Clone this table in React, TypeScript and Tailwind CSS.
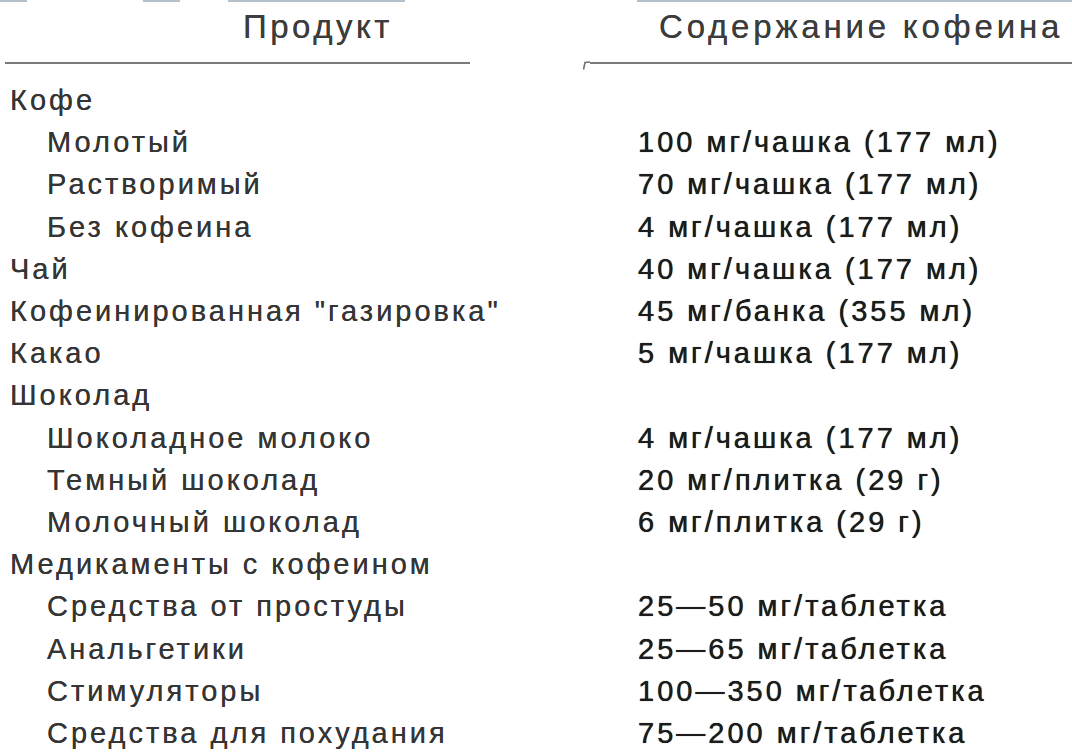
const rows: { name: string; sub?: boolean; value?: string }[] = [
  { name: "Кофе" },
  { name: "Молотый", sub: true, value: "100 мг/чашка (177 мл)" },
  { name: "Растворимый", sub: true, value: "70 мг/чашка (177 мл)" },
  { name: "Без кофеина", sub: true, value: "4 мг/чашка (177 мл)" },
  { name: "Чай", value: "40 мг/чашка (177 мл)" },
  { name: "Кофеинированная \"газировка\"", value: "45 мг/банка (355 мл)" },
  { name: "Какао", value: "5 мг/чашка (177 мл)" },
  { name: "Шоколад" },
  { name: "Шоколадное молоко", sub: true, value: "4 мг/чашка (177 мл)" },
  { name: "Темный шоколад", sub: true, value: "20 мг/плитка (29 г)" },
  { name: "Молочный шоколад", sub: true, value: "6 мг/плитка (29 г)" },
  { name: "Медикаменты с кофеином" },
  { name: "Средства от простуды", sub: true, value: "25—50 мг/таблетка" },
  { name: "Анальгетики", sub: true, value: "25—65 мг/таблетка" },
  { name: "Стимуляторы", sub: true, value: "100—350 мг/таблетка" },
  { name: "Средства для похудания", sub: true, value: "75—200 мг/таблетка" },
];

export default function App() {
  return (
    <div className="w-[1072px] h-[755px] overflow-hidden bg-white [font-family:'Liberation_Sans',Arial,sans-serif]">
      {/* scan edge marks along the top */}
      <div className="flex h-[2px]">
        <div className="w-[27px] bg-[#b4c0ca]" />
        <div className="ml-[116px] w-[37px] bg-[#b4c0ca]" />
        <div className="ml-[48px] w-[177px] bg-[#b4c0ca]" />
        <div className="ml-[232px] flex-1 bg-[#b4c0ca]" />
      </div>

      {/* header */}
      <div className="flex h-[77px]">
        <div className="ml-[5px] w-[465px] flex flex-col">
          <div className="pl-[238px] pt-[6px] text-[33px] leading-[38px] text-[#3c3c3c] tracking-[3.5px] [text-shadow:0_0_0.6px_#555]">Продукт</div>
          <div className="mt-[16px] h-[2px] bg-[#7a7a7a]" />
        </div>
        <div className="ml-[113px] flex-1 flex flex-col">
          <div className="pl-[76px] pt-[6px] text-[33px] leading-[38px] text-[#3c3c3c] tracking-[3.8px] whitespace-nowrap [text-shadow:0_0_0.6px_#555]">Содержание кофеина</div>
          <div className="mt-[16px] flex items-start">
            <svg width="7" height="9" viewBox="0 0 7 9" className="-mt-[1px] shrink-0">
              <path d="M0.5 8.5 L2 1.5 L7 1" stroke="#6f6f6f" strokeWidth="1.6" fill="none" />
            </svg>
            <div className="h-[2px] flex-1 bg-[#7a7a7a]" />
          </div>
        </div>
      </div>

      {/* body */}
      <div className="grid grid-cols-[628px_1fr] pl-[10px] text-[29px] leading-[42.2px] tracking-[3px] whitespace-nowrap">
        {rows.map((r) => (
          <div key={r.name} className="contents">
            <div className={`${r.sub ? "pl-[37px]" : ""} text-[#353535] [text-shadow:0_0_0.6px_#444]`}>{r.name}</div>
            <div className="text-[#1c1c1c] [text-shadow:0_0_0.7px_#000]">{r.value ?? ""}</div>
          </div>
        ))}
      </div>
    </div>
  );
}
